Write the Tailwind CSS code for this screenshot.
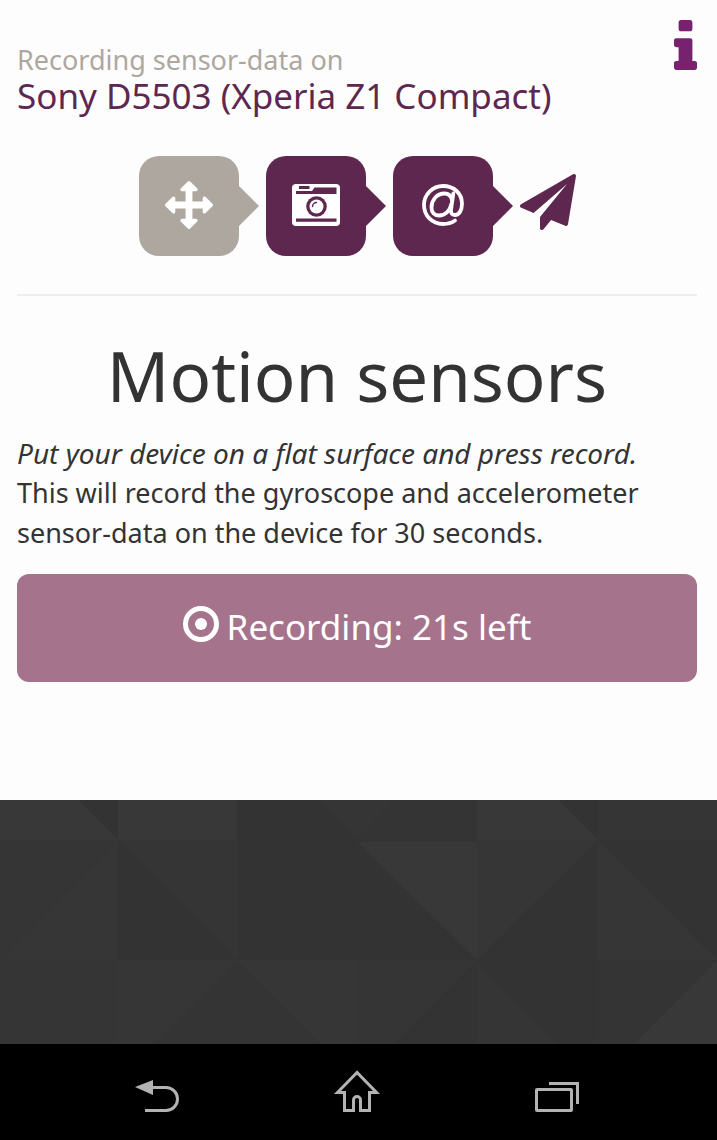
<!DOCTYPE html>
<html lang="en">
<head>
<meta charset="utf-8">
<meta name="viewport" content="width=device-width, initial-scale=1">
<title>Motion sensors</title>
<script src="https://cdn.jsdelivr.net/npm/@tailwindcss/browser@4"></script>
</head>
<body class="flex min-h-screen flex-col bg-[#333333] font-['Noto_Sans',sans-serif] text-[#333333]">
<main class="bg-[#fdfdfd] pt-5 pr-5 pb-[118px] pl-[17px]">
  <header class="flex items-start justify-between">
    <div class="pt-6">
      <p class="text-[27px] leading-8 text-[#aea79f]">Recording sensor-data on</p>
      <p class="text-[35px] leading-10 text-[#5e2750]">Sony D5503 (Xperia Z1 Compact)</p>
    </div>
    <a href="#info" aria-label="Information" class="block text-[#77216f]">
      <svg class="h-[50px] w-[23px]" viewBox="576 128 640 1408" preserveAspectRatio="none" fill="currentColor"><path d="M1216 1344v128q0 26-19 45t-45 19h-512q-26 0-45-19t-19-45v-128q0-26 19-45t45-19h64v-384h-64q-26 0-45-19t-19-45v-128q0-26 19-45t45-19h384q26 0 45 19t19 45v576h64q26 0 45 19t19 45zm-128-1152v192q0 26-19 45t-45 19h-256q-26 0-45-19t-19-45v-192q0-26 19-45t45-19h256q26 0 45 19t19 45z"/></svg>
    </a>
  </header>

  <nav aria-label="Steps" class="mt-10 flex items-center justify-center gap-[7px] text-[#5e2750]">
    <a href="#motion" aria-label="Motion" aria-current="step" class="flex items-center text-[#aea79f]">
      <span class="flex size-[100px] items-center justify-center rounded-[20px] bg-[#aea79f] pb-0.5">
        <svg class="size-12 fill-white" viewBox="0 0 1792 1792"><path d="M1792 896q0 26-19 45l-256 256q-19 19-45 19t-45-19-19-45v-128h-384v384h128q26 0 45 19t19 45-19 45l-256 256q-19 19-45 19t-45-19l-256-256q-19-19-19-45t19-45 45-19h128v-384h-384v128q0 26-19 45t-45 19-45-19l-256-256q-19-19-19-45t19-45l256-256q19-19 45-19t45 19 19 45v128h384v-384h-128q-26 0-45-19t-19-45 19-45l256-256q19-19 45-19t45 19l256 256q19 19 19 45t-19 45-45 19h-128v384h384v-128q0-26 19-45t45-19 45 19l256 256q19 19 19 45z"/></svg>
      </span>
      <svg class="h-10 w-5" viewBox="0 0 20 40" fill="currentColor"><path d="M0 0L20 20L0 40z"/></svg>
    </a>
    <a href="#camera" aria-label="Camera" class="flex items-center">
      <span class="flex size-[100px] items-center justify-center rounded-[20px] bg-[#5e2750] pb-0.5">
        <svg class="h-[42px] w-12" viewBox="0 0 48 42"><rect width="48" height="42" rx="4" fill="#fff"/><g fill="#5e2750"><path d="M7 2h10.500v3H7zM4 7h16l2.500-3.500H44.500V10H4zM4 34.500h40.500v3.200H4z"/><circle cx="24.500" cy="22.500" r="10.300"/></g><circle cx="24.500" cy="22.500" r="7" fill="#fff"/><path d="M20.500 22.500a4 4 0 0 1 4-4" fill="none" stroke="#5e2750" stroke-width="1.500" stroke-linecap="round"/></svg>
      </span>
      <svg class="h-10 w-5" viewBox="0 0 20 40" fill="currentColor"><path d="M0 0L20 20L0 40z"/></svg>
    </a>
    <a href="#email" aria-label="Email" class="flex items-center">
      <span class="flex size-[100px] items-center justify-center rounded-[20px] bg-[#5e2750] pb-0.5">
        <svg class="size-[42px]" viewBox="0 0 42 42" fill="none" stroke="#fff" stroke-width="3.800" stroke-linecap="round" stroke-linejoin="round"><path d="M33 36.500C29.500 39 25.500 40 21 40C10 40 2 31.500 2 21C2 10.500 10.500 2 21 2C32 2 40 9.500 40 19.500C40 26.500 37 31 33 31C29.500 31 28.700 28.500 29 26L31.300 9.500"/><path d="M30 16C29 11.500 26.500 9.500 22.500 9.500C14.500 9.500 9.500 16.500 9.500 23.500C9.500 28.500 12.500 31.500 17 31.500C23 31.500 28 27 29.300 20"/></svg>
      </span>
      <svg class="h-10 w-5" viewBox="0 0 20 40" fill="currentColor"><path d="M0 0L20 20L0 40z"/></svg>
    </a>
    <a href="#send" aria-label="Send" class="pb-2">
      <svg class="block size-14" viewBox="0 0 1792 1792" fill="currentColor"><path d="M1764 11q33 24 27 64l-256 1536q-5 29-32 45-14 8-31 8-11 0-24-5l-453-185-242 295q-18 23-49 23-13 0-22-4-19-7-30.500-23.500t-11.500-36.500v-349l864-1059-1069 925-395-162q-37-14-40-55-2-40 32-59l1664-960q15-9 32-9 20 0 36 11z"/></svg>
    </a>
  </nav>

  <hr class="mt-[38px] border-t-2 border-[#eeeeee]">

  <h1 class="mt-[39px] text-center text-[69px] leading-20">Motion sensors</h1>
  <p class="mt-[18px] text-[27px] leading-10"><em class="block text-[28px] leading-10">Put your device on a flat surface and press record.</em>This will record the gyroscope and accelerometer sensor-data on the device for 30 seconds.</p>

  <button type="button" class="mt-[21px] flex h-[108px] w-full items-center justify-center gap-2 rounded-xl bg-[#a6738d] text-[35px] text-white">
    <svg class="mb-2 size-9" viewBox="0 0 36 36" fill="none"><circle cx="18" cy="18" r="15.500" stroke="#fff" stroke-width="5"/><circle cx="18" cy="18" r="6" fill="#fff"/></svg>
    <span class="pb-0.5">Recording: 21s left</span>
  </button>
</main>

<div class="relative flex-1 overflow-hidden bg-[#333333]">
  <svg class="absolute inset-0 size-full" viewBox="0 0 717 244" preserveAspectRatio="xMidYMin slice" aria-hidden="true">
    <path fill="#353535" d="M0 40H118L0 160zM118 40L237 160V40zM320 0H357V40zM357 0H394L357 40zM598 0H717V40H598zM0 160H118V244H0zM357 160H477L394 244H357zM477 164L558 244H477z"/>
    <path fill="#343434" d="M598 160H717L634 244H598zM237 160L321 244H153zM394 0H477V40H357z"/>
    <path fill="#363636" d="M118 40V160H0zM118 160H237L153 244H118zM237 160H357V244H321zM477 40H598L477 160zM598 40L717 160H598z"/>
    <path fill="#383838" d="M0 0H78L118 40H0zM118 0H237V40H118zM477 0H558L598 40H477zM357 42H477V160zM717 160V244H634z"/>
  </svg>
</div>

<nav aria-label="System" class="flex h-24 items-center justify-center gap-[150px] bg-black pt-1 pr-5 pl-[17px]">
  <button type="button" aria-label="Back">
    <svg class="block h-11 w-[50px] overflow-visible" viewBox="0 0 50 44" fill="none"><path d="M3 15L21 8V23z" fill="#b3b3b3"/><path d="M20 15.500H34A11.500 11.500 0 0 1 34 38.500H13" stroke="#b3b3b3" stroke-width="3"/></svg>
  </button>
  <button type="button" aria-label="Home">
    <svg class="block h-11 w-[50px] overflow-visible" viewBox="0 0 50 44" fill="none" stroke="#b3b3b3" stroke-width="3"><path d="M25 .500L5.500 20.500H12.500V38.500H21.500V28A3.500 3.500 0 0 1 28.500 28V38.500H37.500V20.500H44.500z"/></svg>
  </button>
  <button type="button" aria-label="Recent apps">
    <svg class="block h-11 w-[50px] overflow-visible" viewBox="0 0 50 44" fill="none" stroke="#b3b3b3" stroke-width="3"><rect x="4.500" y="17.500" width="35" height="21" rx="0.500"/><path d="M17 11.500H45.500V32"/></svg>
  </button>
</nav>
</body>
</html>
